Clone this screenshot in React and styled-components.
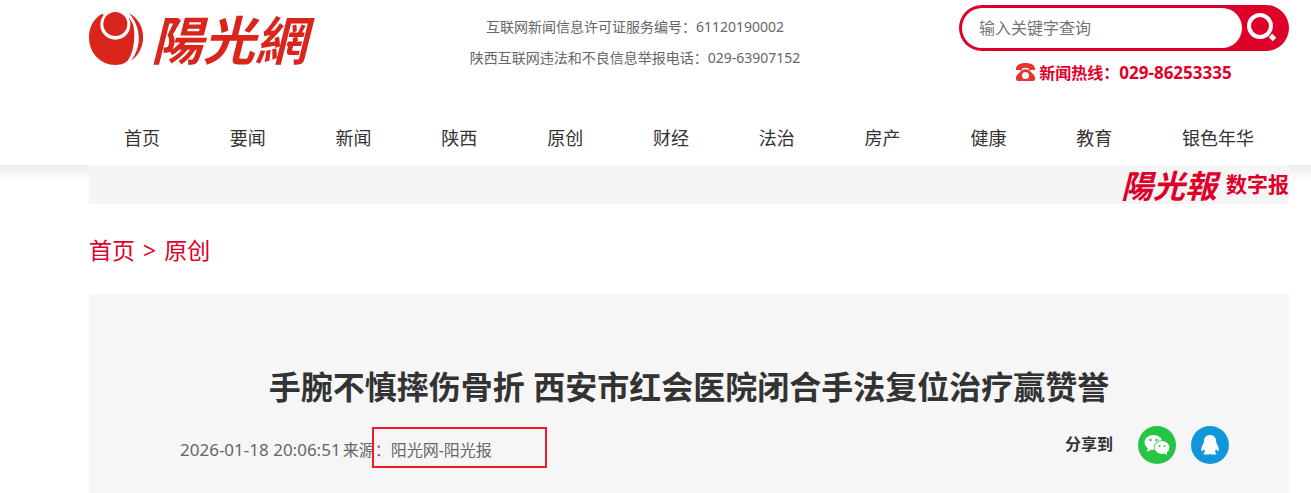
import React, { useState } from "react";
import styled, { createGlobalStyle } from "styled-components";

const GlobalStyle = createGlobalStyle`
  * {
    box-sizing: border-box;
  }

  body {
    margin: 0;
    background: #fff;
    color: #333;
    font-family: "Noto Sans", "Noto Sans CJK SC", sans-serif;
    font-size: 16px;
  }

  a {
    color: inherit;
    text-decoration: none;
  }
`;

const Header = styled.header`
  padding: 0 22px 0 89px;
  background: #fff;
`;

const HeaderTop = styled.div`
  display: flex;
  justify-content: space-between;
  height: 110px;
`;

const Logo = styled.a`
  display: flex;
  align-items: center;
  gap: 8px;
  height: 76px;
  color: #d9251c;
`;

const LogoText = styled.span`
  padding-right: 4px;
  font-family: "Noto Sans CJK TC", sans-serif;
  font-size: 52px;
  line-height: 76px;
  font-weight: 700;
  font-style: italic;
`;

const Licence = styled.div`
  padding-top: 11px;
  color: #666;
  font-size: 14px;
  line-height: 31px;
  text-align: center;

  p {
    margin: 0;
  }
`;

const SearchArea = styled.div`
  width: 330px;
  padding-top: 5px;
`;

const SearchForm = styled.form`
  display: flex;
  height: 46px;
  padding: 3px;
  border-radius: 23px;
  background: #df002a;
`;

const SearchInput = styled.input`
  flex: 1;
  min-width: 0;
  padding: 0 17px;
  border: none;
  border-radius: 20px;
  outline: none;
  background: #fff;
  color: #333;
  font-family: inherit;
  font-size: 16px;

  &::placeholder {
    color: #757575;
  }
`;

const SearchButton = styled.button`
  display: flex;
  align-items: center;
  width: 44px;
  padding: 0 0 0 4px;
  border: none;
  background: none;
  cursor: pointer;
`;

const Hotline = styled.div`
  display: flex;
  align-items: center;
  justify-content: center;
  gap: 4px;
  height: 42px;
  color: #df002a;
  font-weight: 700;
`;

const Nav = styled.nav`
  display: flex;
  height: 55px;
  font-size: 18px;
  line-height: 56px;
`;

const NavLink = styled.a`
  flex: 1 1 auto;
  text-align: center;
`;

const Main = styled.main`
  padding: 0 22px 0 89px;
  background: linear-gradient(#ebebeb, #fff) no-repeat 0 0 / 100% 16px;
`;

const PaperBar = styled.div`
  display: flex;
  justify-content: flex-end;
  height: 39px;
  background: #f5f5f5;
`;

const PaperLink = styled.a`
  display: flex;
  align-items: center;
  gap: 9px;
  color: #df002a;
  font-size: 21px;
  line-height: 39px;
  font-weight: 700;
`;

const PaperName = styled.span`
  font-family: "Noto Sans CJK TC", sans-serif;
  font-size: 32px;
  font-style: italic;
`;

const Breadcrumb = styled.nav`
  display: flex;
  gap: 8px;
  height: 90px;
  color: #df002a;
  font-size: 23px;
  line-height: 92px;
`;

const Article = styled.article`
  min-height: 199px;
  padding: 64px 60px 0 91px;
  background: #f6f6f6;
`;

const Title = styled.h1`
  margin: 0 31px 0 0;
  font-size: 32px;
  line-height: 58px;
  text-align: center;
`;

const Meta = styled.div`
  display: flex;
  justify-content: space-between;
  margin-top: 10px;
`;

const Published = styled.div`
  position: relative;
  display: flex;
  gap: 2px;
  padding-top: 3px;
  color: #666;
  line-height: 42px;
`;

const Digits = styled.span`
  font-size: 17px;
`;

const SourceMark = styled.span`
  position: absolute;
  top: 1px;
  left: 192px;
  width: 175px;
  height: 41px;
  border: 2px solid #ed1c24;
  pointer-events: none;
`;

const Share = styled.div`
  display: flex;
  align-items: center;
  gap: 15px;
  height: 38px;
`;

const ShareLabel = styled.span`
  margin-right: 10px;
  padding-bottom: 4px;
  font-weight: 700;
`;

const ShareButton = styled.button`
  width: 38px;
  height: 38px;
  padding: 0;
  border: none;
  border-radius: 50%;
  background: ${(props) => props.$color};
  cursor: pointer;

  svg {
    display: block;
  }
`;

const channels = [
  "首页",
  "要闻",
  "新闻",
  "陕西",
  "原创",
  "财经",
  "法治",
  "房产",
  "健康",
  "教育",
  "银色年华",
];

const SunMark = () => (
  <svg width="54" height="55" viewBox="27 30 162 165" aria-hidden="true">
    <path
      d="M66 38C38 54 26 84 27 112C29 158 62 192 106 192C126 192 138 187 146 175C161 150 167 110 160 72L148 50L106 71Z"
      fill="#d9251c"
    />
    <circle cx="106" cy="71" r="45" fill="#fff" />
    <circle cx="106" cy="69" r="36" fill="#d9251c" />
    <path d="M147 37C203 66 202 146 153 179C186 137 184 78 147 37Z" fill="#d9251c" />
  </svg>
);

const SearchIcon = () => (
  <svg width="32" height="32" viewBox="0 0 32 32" fill="none" stroke="#fff" aria-hidden="true">
    <circle cx="14" cy="14" r="11" strokeWidth="4" />
    <path d="M24.500 23.500l4 4" strokeWidth="5" />
  </svg>
);

const PhoneIcon = () => (
  <svg width="19" height="18" viewBox="0 0 19 18" fill="#e3342f" aria-hidden="true">
    <path d="M0 6C0 2 4 0 9.500 0S19 2 19 6V7H13V5.500C11 4.500 8 4.500 6 5.500V7H0Z" />
    <path
      fillRule="evenodd"
      d="M6 7Q9.500 5.500 13 7L18 12Q19 13 19 15V16Q19 18 17 18H2Q0 18 0 16V15Q0 13 1 12ZM9.500 9a3.500 3.500 0 1 0 0 7a3.500 3.500 0 1 0 0-7Z"
    />
  </svg>
);

const WechatIcon = () => (
  <svg width="38" height="38" viewBox="0 0 38 38" fill="#fff" aria-hidden="true">
    <ellipse cx="15.500" cy="16.500" rx="9" ry="7.500" />
    <path d="M10 21L9 26L14 23Z" />
    <ellipse cx="24" cy="21.500" rx="8.200" ry="7.200" fill="#28c445" />
    <ellipse cx="24" cy="21.500" rx="7.400" ry="6.400" />
    <path d="M26 26L29 29.500L29 25Z" />
    <g fill="#28c445">
      <circle cx="12.500" cy="14" r="1.200" />
      <circle cx="18.500" cy="14" r="1.200" />
      <circle cx="21.500" cy="20" r="1" />
      <circle cx="26.500" cy="20" r="1" />
    </g>
  </svg>
);

const QqIcon = () => (
  <svg width="38" height="38" viewBox="0 0 38 38" fill="#fff" aria-hidden="true">
    <path d="M19 9C15 9 13 12 13 15C13 17 12 18 11 20C10 23 10 25 11 25C12 25 12 24 13 23C13 24 14 25 14 26C12 27 12 28 14 28.500H18L19 27.500L20 28.500H24C26 28 26 27 24 26C24 25 25 24 25 23C26 24 26 25 27 25C28 25 28 23 27 20C26 18 25 17 25 15C25 12 23 9 19 9Z" />
  </svg>
);

const App = () => {
  const [keyword, setKeyword] = useState("");

  return (
    <>
      <GlobalStyle />
      <Header>
        <HeaderTop>
          <Logo href="#">
            <SunMark />
            <LogoText>陽光網</LogoText>
          </Logo>
          <Licence>
            <p>互联网新闻信息许可证服务编号：61120190002</p>
            <p>陕西互联网违法和不良信息举报电话：029-63907152</p>
          </Licence>
          <SearchArea>
            <SearchForm onSubmit={(e) => e.preventDefault()}>
              <SearchInput
                type="text"
                aria-label="输入关键字查询"
                placeholder="输入关键字查询"
                value={keyword}
                onChange={(e) => setKeyword(e.target.value)}
              />
              <SearchButton type="submit" aria-label="搜索">
                <SearchIcon />
              </SearchButton>
            </SearchForm>
            <Hotline>
              <PhoneIcon />
              <span>
                新闻热线：<Digits>029-86253335</Digits>
              </span>
            </Hotline>
          </SearchArea>
        </HeaderTop>
        <Nav>
          {channels.map((name) => (
            <NavLink href="#" key={name}>
              {name}
            </NavLink>
          ))}
        </Nav>
      </Header>
      <Main>
        <PaperBar>
          <PaperLink href="#">
            <PaperName>陽光報</PaperName>
            数字报
          </PaperLink>
        </PaperBar>
        <Breadcrumb>
          <a href="#">首页</a>
          <span>&gt;</span>
          <a href="#">原创</a>
        </Breadcrumb>
        <Article>
          <Title>手腕不慎摔伤骨折 西安市红会医院闭合手法复位治疗赢赞誉</Title>
          <Meta>
            <Published>
              <Digits>2026-01-18 20:06:51</Digits>
              <span>来源：阳光网-阳光报</span>
              <SourceMark />
            </Published>
            <Share>
              <ShareLabel>分享到</ShareLabel>
              <ShareButton type="button" aria-label="微信" $color="#28c445">
                <WechatIcon />
              </ShareButton>
              <ShareButton type="button" aria-label="QQ" $color="#1296db">
                <QqIcon />
              </ShareButton>
            </Share>
          </Meta>
        </Article>
      </Main>
    </>
  );
};

export default App;
